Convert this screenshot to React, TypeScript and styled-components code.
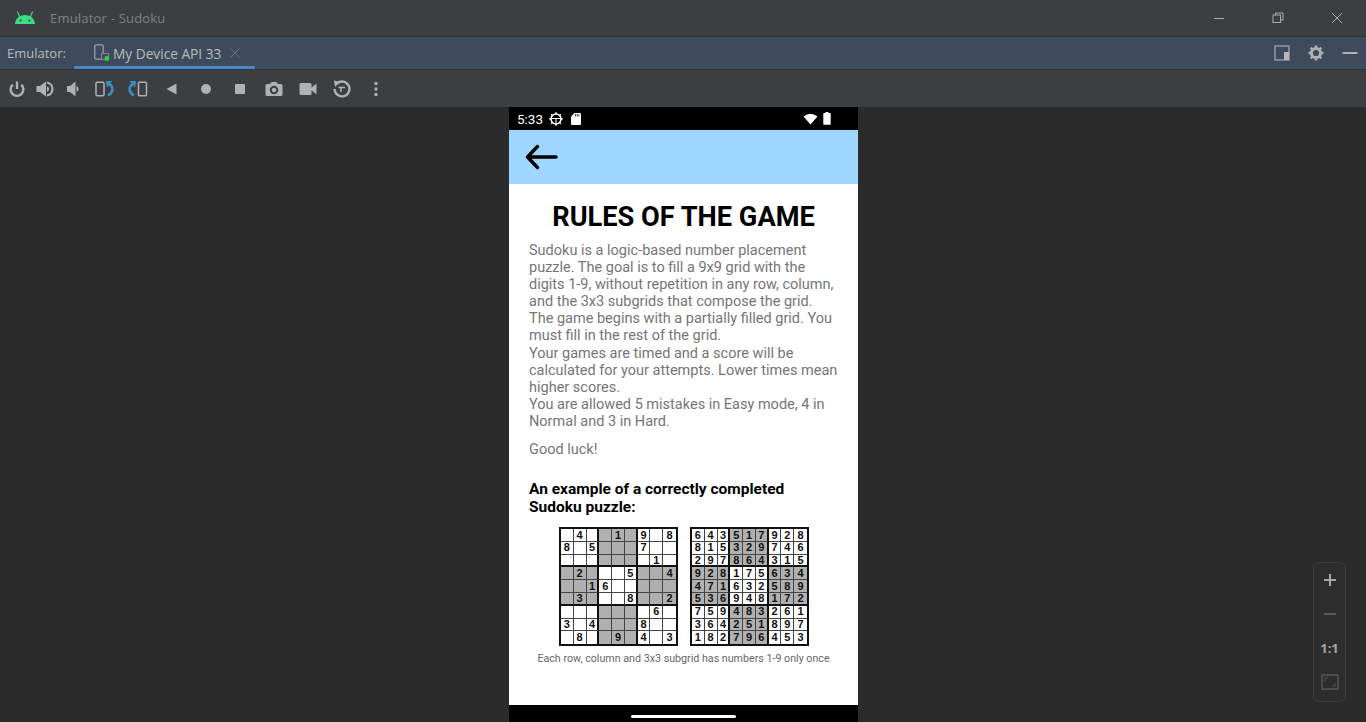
import React from "react";
import styled, { createGlobalStyle } from "styled-components";

const GlobalStyle = createGlobalStyle`
  html, body { margin: 0; padding: 0; height: 100%; background: #2b2b2b; overflow: hidden; }
  #root { height: 100%; }
  * { box-sizing: border-box; }
`;

const Window = styled.div`
  width: 1366px;
  height: 722px;
  display: flex;
  flex-direction: column;
  position: relative;
  font-family: "Open Sans", "Noto Sans", sans-serif;
`;

const TitleBar = styled.div`
  height: 37px;
  flex: none;
  display: flex;
  align-items: center;
  background: #3c3f41;
  border-bottom: 1px solid #323232;
  padding: 0 0 1px 15px;
`;
const AppTitle = styled.span`
  margin-left: 15px;
  font-size: 13px;
  letter-spacing: 0.2px;
  color: #7f8183;
`;
const WindowControls = styled.div`
  margin-left: auto;
  display: flex;
`;
const WindowButton = styled.div`
  width: 59px;
  height: 34px;
  display: flex;
  align-items: center;
  justify-content: center;
`;

const TabBar = styled.div`
  height: 33px;
  flex: none;
  display: flex;
  align-items: center;
  background: #3d4b5c;
  border-bottom: 1px solid #323232;
  padding-left: 7px;
`;
const TabLabel = styled.span`
  font-size: 13px;
  color: #bbbbbb;
  width: 67px;
`;
const Tab = styled.div`
  width: 181px;
  height: 32px;
  display: flex;
  align-items: center;
  padding-left: 20px;
  position: relative;
  font-size: 13.7px;
  color: #bbbbbb;
  &::after {
    content: "";
    position: absolute;
    left: 0;
    right: 0;
    bottom: 0;
    height: 3px;
    border-radius: 2px;
    background: #4a88c7;
  }
`;
const TabText = styled.span`
  margin-left: 3px;
`;
const TabClose = styled.span`
  margin-left: 9px;
  display: flex;
`;
const TabActions = styled.div`
  margin-left: auto;
  margin-right: -1px;
  display: flex;
`;
const ActionButton = styled.div`
  width: 34px;
  height: 32px;
  display: flex;
  align-items: center;
  justify-content: center;
`;

const ToolBar = styled.div`
  height: 37px;
  flex: none;
  display: flex;
  align-items: center;
  background: #3c3f41;
  padding-left: 3px;
`;
const ToolButton = styled.div<{ $w?: number }>`
  width: ${(p) => p.$w ?? 34}px;
  height: 36px;
  display: flex;
  align-items: center;
  justify-content: center;
`;

const Stage = styled.div`
  flex: 1;
  min-height: 0;
  background: #2b2b2b;
  padding-left: 509px;
`;
const Device = styled.div`
  width: 349px;
  height: 100%;
  display: flex;
  flex-direction: column;
  font-family: Roboto, sans-serif;
`;
const StatusBar = styled.div`
  height: 23px;
  flex: none;
  background: #000;
  color: #fff;
  display: flex;
  align-items: center;
  padding: 0 27px 0 8px;
  font-size: 13.5px;
  gap: 6px;
`;
const StatusRight = styled.div`
  margin-left: auto;
  display: flex;
  align-items: center;
  gap: 5px;
`;
const AppBar = styled.div`
  height: 54px;
  flex: none;
  background: #9fd6ff;
  display: flex;
  align-items: center;
  padding-left: 16px;
`;
const Content = styled.div`
  flex: 1;
  min-height: 0;
  background: #fff;
  padding: 18px 20px 0;
`;
const Title = styled.h1`
  margin: 0 -10px 10px;
  font-size: 27.2px;
  line-height: 30px;
  font-weight: 700;
  text-align: center;
  color: #000;
  white-space: nowrap;
`;
const Para = styled.p`
  margin: 0;
  font-size: 14.5px;
  line-height: 17.1px;
  font-weight: 400;
  color: #757575;
`;
const Luck = styled(Para)`
  margin-top: 11px;
`;
const Subhead = styled.h2`
  margin: 22px 0 0;
  font-size: 15.5px;
  line-height: 18px;
  font-weight: 700;
  color: #000;
`;
const Puzzles = styled.div`
  display: flex;
  justify-content: center;
  gap: 12px;
  margin-top: 11px;
  padding-left: 1px;
`;
const Grid = styled.div`
  width: 119px;
  height: 119px;
  display: grid;
  grid-template-columns: repeat(9, minmax(0, 1fr));
  grid-template-rows: repeat(9, minmax(0, 1fr));
  border: 2px solid #111;
  background: #fff;
`;
const Cell = styled.div<{ $shade: boolean; $right: boolean; $bottom: boolean }>`
  display: flex;
  align-items: center;
  justify-content: center;
  min-height: 0;
  overflow: hidden;
  font-family: "Liberation Sans", Arial, sans-serif;
  font-size: 11px;
  line-height: 11px;
  font-weight: 700;
  color: #111;
  background: ${(p) => (p.$shade ? "#b0b0b0" : "#fff")};
  border-right: ${(p) => (p.$right ? "2px solid #111" : "1px solid #444")};
  border-bottom: ${(p) => (p.$bottom ? "2px solid #111" : "1px solid #444")};
  &:nth-child(9n) { border-right: none; }
  &:nth-child(n + 73) { border-bottom: none; }
`;
const Caption = styled.div`
  margin: 7px -10px 0;
  font-size: 10.7px;
  line-height: 12px;
  color: #666;
  text-align: center;
  white-space: nowrap;
`;
const NavBar = styled.div`
  height: 17px;
  flex: none;
  background: #000;
  display: flex;
  justify-content: center;
  align-items: flex-start;
  padding-top: 10px;
`;
const NavPill = styled.div`
  width: 105px;
  height: 3px;
  border-radius: 2px;
  background: #fff;
`;

const ZoomPanel = styled.div`
  position: absolute;
  left: 1313px;
  top: 562px;
  width: 33px;
  height: 140px;
  background: #2d2d2d;
  border: 1px solid #3a3a3a;
  border-radius: 6px;
  display: flex;
  flex-direction: column;
  align-items: center;
`;
const ZoomItem = styled.div`
  height: 34px;
  width: 100%;
  flex: none;
  display: flex;
  align-items: center;
  justify-content: center;
  font-family: "Open Sans", sans-serif;
  font-size: 13px;
  font-weight: 700;
  color: #a5a5a5;
`;

const puzzle = [
  "_4__1_9_8",
  "8_5___7__",
  "_______1_",
  "_2___5__4",
  "__16_____",
  "_3___8__2",
  "_______6_",
  "3_4___8__",
  "_8__9_4_3",
];
const solved = [
  "643517928",
  "815329746",
  "297864315",
  "928175634",
  "471632589",
  "536948172",
  "759483261",
  "364251897",
  "182796453",
];

const isShaded = (r: number, c: number) => (Math.floor(r / 3) + Math.floor(c / 3)) % 2 === 1;

const Sudoku = ({ rows }: { rows: string[] }) => (
  <Grid>
    {rows.map((row, r) =>
      row.split("").map((ch, c) => (
        <Cell key={`${r}-${c}`} $shade={isShaded(r, c)} $right={c % 3 === 2} $bottom={r % 3 === 2}>
          {ch === "_" ? "" : ch}
        </Cell>
      ))
    )}
  </Grid>
);

const GRAY = "#afb1b3";
const BLUE = "#3592c4";

const AndroidLogo = () => (
  <svg width="20" height="14" viewBox="0 0 20 14">
    <path d="M0 13 C0.5 7.5 4.5 4 10 4 C15.5 4 19.5 7.5 20 13 Z" fill="#3ddc84" />
    <path d="M4.5 5.5 L2.6 1 M15.5 5.5 L17.4 1" stroke="#3ddc84" strokeWidth="1.2" strokeLinecap="round" />
    <circle cx="5.6" cy="9.4" r="1" fill="#3c3f41" />
    <circle cx="14.4" cy="9.4" r="1" fill="#3c3f41" />
  </svg>
);

const Icon = ({ w = 18, h = 18, children }: { w?: number; h?: number; children: React.ReactNode }) => (
  <svg width={w} height={h} viewBox={`0 0 ${w} ${h}`} fill="none">
    {children}
  </svg>
);

const RotateLeftIcon = () => (
  <Icon w={20} h={18}>
    <rect x="2" y="2.2" width="8" height="13.6" rx="1" stroke={GRAY} strokeWidth="1.5" />
    <path d="M13 3.5 C20 5 20 12 14 15.5" stroke={BLUE} strokeWidth="2.6" />
    <path d="M12 1 H18.5 L13 7.5 Z" fill={BLUE} />
  </Icon>
);

const RotateRightIcon = () => (
  <Icon w={20} h={18}>
    <rect x="10.5" y="2.2" width="8" height="13.6" rx="1" stroke={GRAY} strokeWidth="1.5" />
    <path d="M7 3.5 C0 5 0 12 6 15.5" stroke={BLUE} strokeWidth="2.6" />
    <path d="M8 1 H1.5 L7 7.5 Z" fill={BLUE} />
  </Icon>
);

const DeviceTabIcon = () => (
  <svg width="16" height="18" viewBox="0 0 16 18" fill="none">
    <rect x="0.8" y="0.8" width="8.4" height="14.4" rx="1.2" stroke="#9da0a2" strokeWidth="1.3" />
    <rect x="7.5" y="9.5" width="7" height="6" fill="#3d4b5c" stroke="#8b6fb0" strokeWidth="1.2" />
    <circle cx="12.8" cy="14.5" r="2.4" fill="#1fe02a" />
  </svg>
);

function App() {
  return (
    <Window>
      <GlobalStyle />
      <TitleBar>
        <AndroidLogo />
        <AppTitle>Emulator - Sudoku</AppTitle>
        <WindowControls>
          <WindowButton>
            <Icon w={12} h={12}>
              <path d="M1 6.5 H11" stroke="#a9abad" />
            </Icon>
          </WindowButton>
          <WindowButton>
            <Icon w={12} h={12}>
              <rect x="1" y="3" width="7.5" height="7.5" stroke="#a9abad" />
              <path d="M3.5 3 V1 H11 V8 H8.5" stroke="#a9abad" />
            </Icon>
          </WindowButton>
          <WindowButton>
            <Icon w={12} h={12}>
              <path d="M1 1 L11 11 M11 1 L1 11" stroke="#a9abad" />
            </Icon>
          </WindowButton>
        </WindowControls>
      </TitleBar>

      <TabBar>
        <TabLabel>Emulator:</TabLabel>
        <Tab>
          <DeviceTabIcon />
          <TabText>My Device API 33</TabText>
          <TabClose>
            <Icon w={10} h={10}>
              <path d="M0.5 0.5 L9.5 9.5 M9.5 0.5 L0.5 9.5" stroke="#6c7178" />
            </Icon>
          </TabClose>
        </Tab>
        <TabActions>
          <ActionButton>
            <Icon w={16} h={16}>
              <rect x="1" y="1" width="14" height="14" stroke="#9a9da0" strokeWidth="1.4" />
              <rect x="10" y="7" width="5" height="8" fill="#b5b7b9" />
            </Icon>
          </ActionButton>
          <ActionButton>
            <Icon w={16} h={16}>
              <circle cx="8" cy="8" r="4.6" stroke={GRAY} strokeWidth="3" />
              <path d="M8 0.5 V3 M8 13 V15.5 M0.5 8 H3 M13 8 H15.5 M2.7 2.7 L4.5 4.5 M11.5 11.5 L13.3 13.3 M13.3 2.7 L11.5 4.5 M4.5 11.5 L2.7 13.3" stroke={GRAY} strokeWidth="2.4" />
            </Icon>
          </ActionButton>
          <ActionButton>
            <Icon w={16} h={16}>
              <path d="M0.5 8 H15.5" stroke={GRAY} strokeWidth="2" />
            </Icon>
          </ActionButton>
        </TabActions>
      </TabBar>

      <ToolBar>
        <ToolButton $w={28}>
          <Icon>
            <path d="M4.8 4.6 A6.4 6.4 0 1 0 13.2 4.6" stroke={GRAY} strokeWidth="2.4" />
            <path d="M9 1.5 V9" stroke={GRAY} strokeWidth="2.4" />
          </Icon>
        </ToolButton>
        <ToolButton $w={28}>
          <Icon>
            <path d="M0.5 6 H4 L10 1.5 V16.5 L4 12 H0.5 Z" fill={GRAY} />
            <path d="M11 2.5 A6.6 6.6 0 0 1 11 15.5" stroke={GRAY} strokeWidth="2.2" />
            <path d="M11 6.3 A2.8 2.8 0 0 1 11 11.7 Z" fill={GRAY} />
          </Icon>
        </ToolButton>
        <ToolButton $w={28}>
          <Icon>
            <path d="M3 6 H6 L11.5 1.5 V16.5 L6 12 H3 Z" fill={GRAY} />
            <path d="M12.5 6 A3.2 3.2 0 0 1 12.5 12 Z" fill={GRAY} />
          </Icon>
        </ToolButton>
        <ToolButton>
          <RotateLeftIcon />
        </ToolButton>
        <ToolButton>
          <RotateRightIcon />
        </ToolButton>
        <ToolButton>
          <Icon>
            <path d="M3.5 9 L13.5 3.5 V14.5 Z" fill={GRAY} />
          </Icon>
        </ToolButton>
        <ToolButton>
          <Icon>
            <circle cx="9" cy="9" r="5" fill={GRAY} />
          </Icon>
        </ToolButton>
        <ToolButton>
          <Icon>
            <rect x="4" y="4" width="10" height="10" rx="1" fill={GRAY} />
          </Icon>
        </ToolButton>
        <ToolButton>
          <Icon>
            <path fillRule="evenodd" d="M0.5 5.5 A1.5 1.5 0 0 1 2 4 H5 L6.5 2 H11.5 L13 4 H16 A1.5 1.5 0 0 1 17.5 5.5 V14.5 A1.5 1.5 0 0 1 16 16 H2 A1.5 1.5 0 0 1 0.5 14.5 Z M9 5.8 A4.2 4.2 0 1 0 9 14.2 A4.2 4.2 0 1 0 9 5.8 Z" fill={GRAY} />
            <circle cx="9" cy="10" r="2.2" fill={GRAY} />
          </Icon>
        </ToolButton>
        <ToolButton>
          <Icon>
            <rect x="0.5" y="3" width="12" height="12" rx="1.5" fill={GRAY} />
            <path d="M12 8 L17.5 3.5 V14.5 L12 10 Z" fill={GRAY} />
          </Icon>
        </ToolButton>
        <ToolButton>
          <Icon>
            <path d="M4 3.5 A7.4 7.4 0 1 1 1.6 9" stroke={GRAY} strokeWidth="2.4" />
            <path d="M1 0.5 L7 2 L2 7 Z" fill={GRAY} />
            <path d="M5.5 7.5 H12 M8 7.5 V12" stroke={GRAY} strokeWidth="1.5" />
          </Icon>
        </ToolButton>
        <ToolButton>
          <Icon>
            <circle cx="9" cy="3.5" r="1.7" fill={GRAY} />
            <circle cx="9" cy="9" r="1.7" fill={GRAY} />
            <circle cx="9" cy="14.5" r="1.7" fill={GRAY} />
          </Icon>
        </ToolButton>
      </ToolBar>

      <Stage>
        <Device>
          <StatusBar>
            5:33
            <Icon w={15} h={14}>
              <circle cx="7" cy="7" r="5" stroke="#fff" strokeWidth="1.6" />
              <path d="M7 0.3 V2 M0.3 7 H2 M12 7 H13.7 M7 12 V13.7 M2.2 2.2 L3.4 3.4 M10.6 10.6 L11.8 11.8 M11.8 2.2 L10.6 3.4 M3.4 10.6 L2.2 11.8" stroke="#fff" strokeWidth="1.4" />
              <path d="M2.5 6.5 H11.5 M7 6.5 V11.5" stroke="#fff" strokeWidth="1.1" />
            </Icon>
            <Icon w={12} h={14}>
              <path d="M4.5 1 H10 A1 1 0 0 1 11 2 V12 A1 1 0 0 1 10 13 H2 A1 1 0 0 1 1 12 V4.5 Z" fill="#fff" />
              <path d="M5.5 2 V4.5 M7.2 2 V4.5 M8.9 2 V4.5" stroke="#000" strokeWidth="0.7" />
            </Icon>
            <StatusRight>
              <Icon w={15} h={12}>
                <path d="M0.5 3.5 Q7.5 -2 14.5 3.5 L7.5 11.5 Z" fill="#fff" />
              </Icon>
              <Icon w={8} h={13}>
                <path d="M2.5 1 V0 H5.5 V1 H7 A0.7 0.7 0 0 1 7.7 1.7 V12 A0.8 0.8 0 0 1 7 12.8 H1 A0.8 0.8 0 0 1 0.3 12 V1.7 A0.7 0.7 0 0 1 1 1 Z" fill="#fff" />
              </Icon>
            </StatusRight>
          </StatusBar>
          <AppBar>
            <svg width="33" height="26" viewBox="0 0 33 26" fill="none">
              <path d="M2.5 13 H31 M12.5 2.5 L2.5 13 L12.5 23.5" stroke="#000" strokeWidth="3.4" strokeLinecap="round" strokeLinejoin="round" />
            </svg>
          </AppBar>
          <Content>
            <Title>RULES OF THE GAME</Title>
            <Para>
              Sudoku is a logic-based number placement puzzle. The goal is to fill a 9x9 grid with the digits 1-9, without repetition in any row, column, and the 3x3 subgrids that compose the grid.
              <br />
              The game begins with a partially filled grid. You must fill in the rest of the grid.
              <br />
              Your games are timed and a score will be calculated for your attempts. Lower times mean higher scores.
              <br />
              You are allowed 5 mistakes in Easy mode, 4 in Normal and 3 in Hard.
            </Para>
            <Luck>Good luck!</Luck>
            <Subhead>
              An example of a correctly completed
              <br />
              Sudoku puzzle:
            </Subhead>
            <Puzzles>
              <Sudoku rows={puzzle} />
              <Sudoku rows={solved} />
            </Puzzles>
            <Caption>Each row, column and 3x3 subgrid has numbers 1-9 only once</Caption>
          </Content>
          <NavBar>
            <NavPill />
          </NavBar>
        </Device>
      </Stage>

      <ZoomPanel>
        <ZoomItem>
          <Icon w={14} h={14}>
            <path d="M7 1 V13 M1 7 H13" stroke="#a8a8a8" strokeWidth="2" />
          </Icon>
        </ZoomItem>
        <ZoomItem>
          <Icon w={14} h={14}>
            <path d="M1 7 H13" stroke="#5a5a5a" strokeWidth="2" />
          </Icon>
        </ZoomItem>
        <ZoomItem>1:1</ZoomItem>
        <ZoomItem>
          <Icon w={18} h={16}>
            <rect x="1" y="1" width="16" height="14" stroke="#565656" strokeWidth="1.5" />
            <path d="M4 7 V4 H7 M14 9 V12 H11" stroke="#565656" />
          </Icon>
        </ZoomItem>
      </ZoomPanel>
    </Window>
  );
}

export default App;
